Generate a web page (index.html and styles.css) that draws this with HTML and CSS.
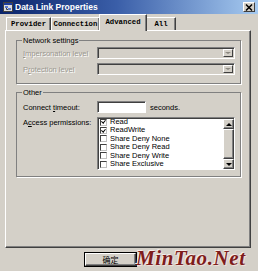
FILE: index.html
```html
<!DOCTYPE HTML>
<html>
<head>
	<title>Data Link Properties</title>
	<meta charset="utf-8" />
	<link rel="stylesheet" href="styles.css">
</head>
<body>
<div class="window">
	<div class="titlebar">
		<svg class="appicon" width="10" height="10" viewBox="0 0 10 10">
			<rect x="0.5" y="0.5" width="9" height="9" fill="#dcdcdc" stroke="#404040"/>
			<rect x="1" y="1" width="8" height="2" fill="#1c3c9c"/>
			<rect x="2" y="4" width="3" height="2" fill="#5a7ad0"/>
			<rect x="5" y="6" width="3" height="2" fill="#5a7ad0"/>
			<path d="M3.5 6 V7.5 H5" stroke="#404040" fill="none"/>
		</svg>
		<span class="title">Data Link Properties</span>
		<span class="close">
			<svg width="8" height="7" viewBox="0 0 8 7"><path d="M1 0.5 L7 6.5 M7 0.5 L1 6.5" stroke="#000" stroke-width="1.5"/></svg>
		</span>
	</div>

	<div class="tabs">
		<div class="tab t-provider">Provider</div>
		<div class="tab t-connection">Connection</div>
		<div class="tab t-advanced active">Advanced</div>
		<div class="tab t-all">All</div>
	</div>

	<div class="panel">
		<fieldset class="group net">
			<legend>Network settings</legend>
			<div class="row">
				<label class="lbl disabled"><u>I</u>mpersonation level</label>
				<div class="combo"><span class="drop"><span class="arrow"></span></span></div>
			</div>
			<div class="row">
				<label class="lbl disabled">P<u>r</u>otection level</label>
				<div class="combo"><span class="drop"><span class="arrow"></span></span></div>
			</div>
		</fieldset>

		<fieldset class="group other">
			<legend>Other</legend>
			<div class="row">
				<label class="lbl">Connect <u>t</u>imeout:</label>
				<div class="textbox"></div>
				<span class="unit">seconds.</span>
			</div>
			<div class="row top">
				<label class="lbl">A<u>c</u>cess permissions:</label>
				<div class="listbox">
					<ul class="items">
						<li><span class="check on"></span>Read</li>
						<li><span class="check on"></span>ReadWrite</li>
						<li><span class="check"></span>Share Deny None</li>
						<li><span class="check"></span>Share Deny Read</li>
						<li><span class="check"></span>Share Deny Write</li>
						<li><span class="check"></span>Share Exclusive</li>
					</ul>
					<div class="vscroll">
						<span class="sbtn"><span class="arrow up"></span></span>
						<span class="thumb"></span>
						<span class="sbtn"><span class="arrow"></span></span>
					</div>
				</div>
			</div>
		</fieldset>
	</div>

	<div class="buttons">
		<div class="btn default">确定</div>
	</div>

	<div class="watermark">MinTao.Net</div>
</div>
</body>
</html>
```

FILE: styles.css
```css
body{
	margin: 0px;
	padding: 0px;
	background-color: #d4d0c8;
	font-family: "Liberation Sans", Arial, sans-serif;
	font-size: 7.5px;
	color: #000;
}
.window{
	position: relative;
	width: 258px;
	height: 271px;
	overflow: hidden;
}

/* title bar */
.titlebar{
	height: 14px;
	display: flex;
	align-items: center;
	padding: 0 3px;
	background: linear-gradient(to right, #0a246a, #3a5ea8 45%, #a6caf0);
	color: #fff;
	font-weight: bold;
	font-size: 8.5px;
}
.appicon{
	margin-right: 2px;
	flex: none;
}
.close{
	margin-left: auto;
	width: 12px;
	height: 10px;
	box-sizing: border-box;
	background-color: #d4d0c8;
	border: 1px solid;
	border-color: #fff #404040 #404040 #fff;
	display: flex;
	align-items: center;
	justify-content: center;
}

/* tabs */
.tabs{
	height: 16px;
	display: flex;
	align-items: flex-end;
	padding-left: 6px;
	font-family: "Liberation Mono", "Courier New", monospace;
	font-weight: bold;
	font-size: 7.3px;
}
.tab{
	height: 13px;
	box-sizing: border-box;
	border-top: 1px solid #fff;
	border-left: 1px solid #fff;
	border-right: 1px solid #404040;
	box-shadow: inset -1px 0 #808080;
	display: flex;
	align-items: center;
	justify-content: center;
	background-color: #d4d0c8;
}
.t-provider{ width: 45px; }
.t-connection{ width: 49px; }
.t-advanced{ width: 47px; }
.t-all{ width: 30px; }
.tab.active{
	height: 17px;
	margin-bottom: -1px;
	margin-left: -1px;
	margin-right: -1px;
	width: 48px;
	position: relative;
	z-index: 1;
	padding-bottom: 2px;
}

/* page */
.panel{
	margin-left: 5px;
	width: 246px;
	height: 218px;
	box-sizing: border-box;
	border: 1px solid;
	border-color: #fff #404040 #404040 #fff;
	box-shadow: inset -1px -1px #808080;
	padding-left: 10px;
}
.group{
	width: 225px;
	box-sizing: border-box;
	margin: 0;
	border: 1px solid #808080;
	box-shadow: 1px 1px 0 #fff;
	padding: 2px 5px 8px 6px;
	min-inline-size: 0;
}
.group legend{
	padding: 0 1px;
	margin-left: -1px;
	line-height: 9px;
	color: #000;
}
.net{ margin-top: 5px; }
.other{
	margin-top: 4px;
	padding-top: 4px;
	padding-bottom: 6px;
}
.row{
	display: flex;
	align-items: center;
}
.row + .row{ margin-top: 4px; }
.row.top{ align-items: flex-start; }
.lbl{
	width: 74px;
	flex: none;
	line-height: 9px;
}
.row.top .lbl{ margin-top: 1px; }
.lbl.disabled{
	color: #9a978f;
	text-shadow: 1px 1px 0 #fff;
}

.combo{
	width: 138px;
	height: 12px;
	box-sizing: border-box;
	border: 1px solid;
	border-color: #808080 #fff #fff #808080;
	box-shadow: inset 1px 1px #404040;
	display: flex;
	justify-content: flex-end;
	padding: 1px;
}
.drop{
	width: 10px;
	box-sizing: border-box;
	border: 1px solid;
	border-color: #fff #404040 #404040 #fff;
	display: flex;
	align-items: center;
	justify-content: center;
}
.combo .arrow{
	border-left: 3px solid transparent;
	border-right: 3px solid transparent;
	border-top: 2px solid #8a877f;
}

.textbox{
	width: 49px;
	height: 12px;
	box-sizing: border-box;
	background-color: #fff;
	border: 1px solid;
	border-color: #808080 #fff #fff #808080;
	box-shadow: inset 1px 1px #404040;
}
.unit{
	margin-left: 4px;
	line-height: 9px;
}

.listbox{
	width: 139px;
	height: 53px;
	box-sizing: border-box;
	background-color: #fff;
	border: 1px solid;
	border-color: #808080 #fff #fff #808080;
	box-shadow: inset 1px 1px #404040;
	display: flex;
}
.items{
	list-style: none;
	margin: 0;
	padding: 0 0 0 2px;
	flex: 1;
}
.items li{
	height: 8.4px;
	line-height: 8.4px;
	display: flex;
	align-items: center;
}
.check{
	width: 7px;
	height: 7px;
	box-sizing: border-box;
	border: 1px solid;
	border-color: #404040 #c0c0c0 #c0c0c0 #404040;
	background-color: #fff;
	margin-right: 3px;
	position: relative;
}
.check.on::after{
	content: "";
	position: absolute;
	left: 1px;
	top: -0.5px;
	width: 1.5px;
	height: 3px;
	border: solid #000;
	border-width: 0 1.5px 1.5px 0;
	transform: rotate(40deg);
}
.vscroll{
	width: 11px;
	display: flex;
	flex-direction: column;
	background-color: #e8e6e0;
	margin-top: 1px;
}
.sbtn, .thumb{
	box-sizing: border-box;
	background-color: #d4d0c8;
	border: 1px solid;
	border-color: #fff #404040 #404040 #fff;
	box-shadow: inset -1px -1px #808080;
}
.sbtn{
	height: 10px;
	display: flex;
	align-items: center;
	justify-content: center;
}
.thumb{ flex: 1; }
.vscroll .arrow{
	border-left: 3px solid transparent;
	border-right: 3px solid transparent;
	border-top: 3px solid #000;
}
.vscroll .arrow.up{
	border-top: 0;
	border-bottom: 3px solid #000;
}

/* dialog buttons */
.buttons{
	display: flex;
	margin-top: 5px;
	padding-left: 85px;
}
.btn{
	width: 51px;
	height: 13px;
	box-sizing: border-box;
	border: 1px solid;
	border-color: #fff #404040 #404040 #fff;
	box-shadow: inset -1px -1px #808080;
	display: flex;
	align-items: center;
	justify-content: center;
	font-family: "Noto Sans CJK SC", sans-serif;
	font-size: 8px;
}
.btn.default{
	outline: 1px solid #000;
}

.watermark{
	position: absolute;
	left: 136px;
	top: 246px;
	font-family: "Liberation Serif", "Times New Roman", serif;
	font-style: italic;
	font-weight: bold;
	font-size: 21px;
	letter-spacing: 0.6px;
	color: #7e1c1c;
	text-shadow: 1px 1px 0 #f0e0d8, -1px -1px 0 #f4ecea;
}
```
